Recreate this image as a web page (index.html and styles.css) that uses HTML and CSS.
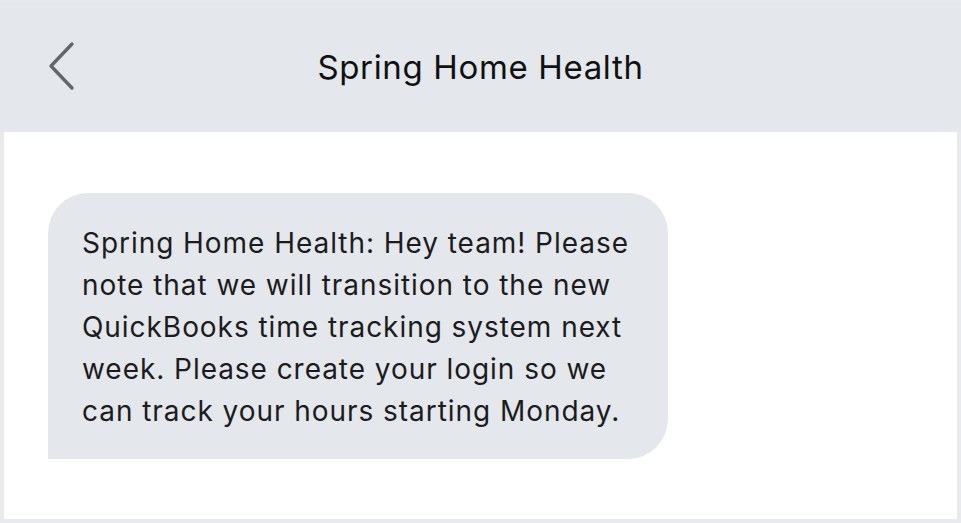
FILE: index.html
```html
<!DOCTYPE html>
<html>
<head>
<meta charset="utf-8">
<link rel="stylesheet" href="styles.css">
</head>
<body>
<div class="frame">
  <header class="header">
    <button class="back" aria-label="Back">
      <svg width="30" height="52" viewBox="0 0 30 52"><path d="M25 3 L4 25 L25 47" fill="none" stroke="#63666b" stroke-width="3.4" stroke-linecap="round" stroke-linejoin="round"/></svg>
    </button>
    <h1 class="title">Spring Home Health</h1>
  </header>
  <main class="thread">
    <div class="bubble">Spring Home Health: Hey team! Please note that we will transition to the new QuickBooks time tracking system next week. Please create your login so we can track your hours starting Monday.</div>
  </main>
</div>
</body>
</html>
```

FILE: styles.css
```css
html, body {
  margin: 0;
  padding: 0;
  height: 100%;
}
body {
  background: #e9eaee;
  font-family: "Inter", "Liberation Sans", sans-serif;
}
.frame {
  height: 523px;
  box-sizing: border-box;
  padding: 1px 4px 4px 4px;
  display: flex;
  flex-direction: column;
}
.header {
  position: relative;
  height: 131px;
  background: #e4e7eb;
  display: flex;
  align-items: center;
  justify-content: center;
  margin: 0 -4px;
}
.back {
  position: absolute;
  left: 47px;
  top: 40px;
  background: none;
  border: 0;
  padding: 0;
  width: 30px;
  height: 52px;
}
.back svg { display: block; }
.title {
  margin: 0;
  font-size: 33px;
  font-weight: 400;
  color: #111;
  letter-spacing: 0.65px;
}
.thread {
  flex: 1;
  background: #fff;
  padding: 61px 0 0 44px;
}
.bubble {
  width: 558px;
  background: #e4e7eb;
  border-radius: 40px 40px 40px 0;
  padding: 29px 28px 27px 34px;
  font-size: 28px;
  line-height: 42px;
  letter-spacing: 0.95px;
  color: #1c1c1e;
}
```
